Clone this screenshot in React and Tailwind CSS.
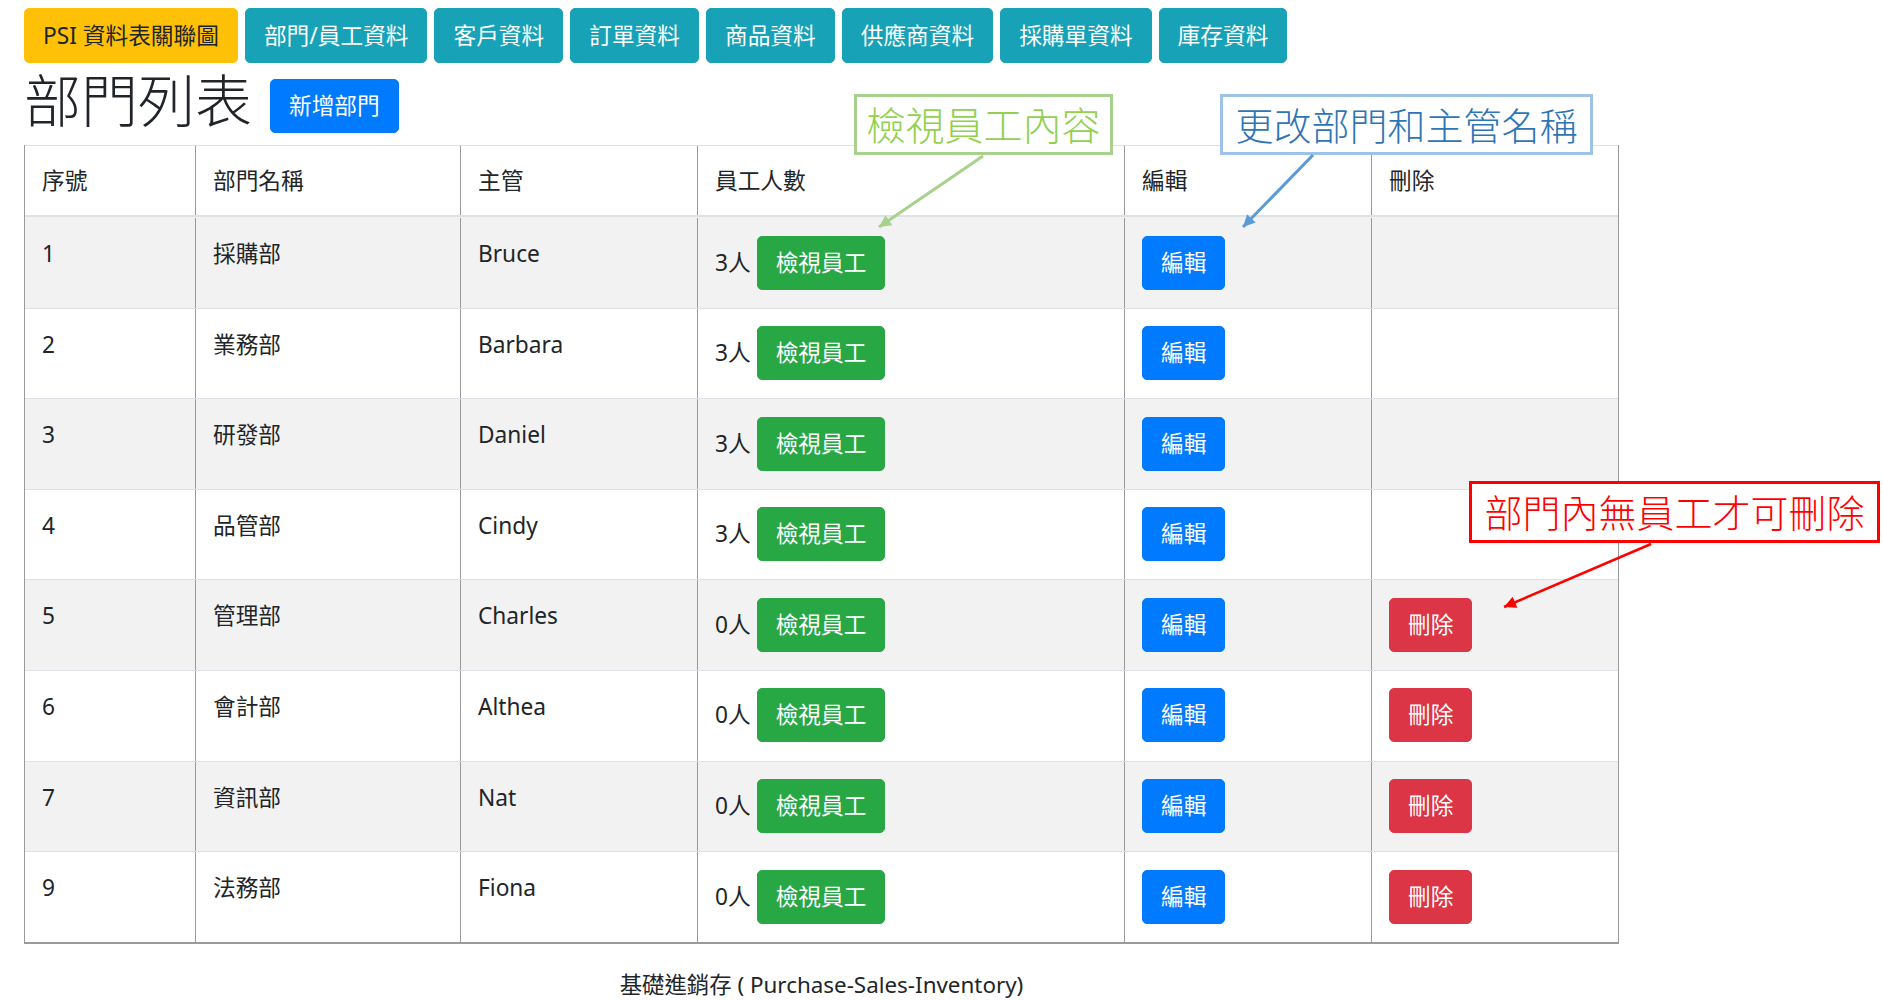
import React from "react";

const rows = [
  ["1", "採購部", "Bruce", 3, false],
  ["2", "業務部", "Barbara", 3, false],
  ["3", "研發部", "Daniel", 3, false],
  ["4", "品管部", "Cindy", 3, false],
  ["5", "管理部", "Charles", 0, true],
  ["6", "會計部", "Althea", 0, true],
  ["7", "資訊部", "Nat", 0, true],
  ["9", "法務部", "Fiona", 0, true],
];

const navs = ["部門/員工資料", "客戶資料", "訂單資料", "商品資料", "供應商資料", "採購單資料", "庫存資料"];

const GRID = "grid grid-cols-[170px_265px_237px_427px_247px_248px]";
const CELL = "px-[17px] border-l-[1.5px] border-[#9a9a9a] first:border-l-0";

function Btn({ color, children }) {
  return (
    <span
      className={`inline-flex h-[54px] items-center rounded-[5px] border-[1.4px] px-[18px] text-[22.7px] leading-[34px] text-white ${color}`}
    >
      {children}
    </span>
  );
}

export default function App() {
  return (
    <div className="relative min-h-[1000px] w-full bg-white font-['Noto_Sans','Noto_Sans_CJK_TC',sans-serif] text-[#212529]">
      <div className="pl-[24px] pt-[8px]">
        {/* nav */}
        <div className="flex gap-[7px]">
          <span className="inline-flex h-[55px] items-center rounded-[5px] border-[1.4px] border-[#ffc107] bg-[#ffc107] px-[18px] text-[22.7px] leading-[34px] text-[#212529]">
            PSI 資料表關聯圖
          </span>
          {navs.map((n) => (
            <span
              key={n}
              className="inline-flex h-[55px] items-center rounded-[5px] border-[1.4px] border-[#17a2b8] bg-[#17a2b8] px-[18px] text-[22.7px] leading-[34px] text-white"
            >
              {n}
            </span>
          ))}
        </div>

        {/* heading */}
        <div className="mt-[3px] flex h-[79px] items-start">
          <h1 className="text-[57px] font-light leading-[68px]">部門列表</h1>
          <div className="ml-[18px] mt-[13px]">
            <Btn color="border-[#007bff] bg-[#007bff]">新增部門</Btn>
          </div>
        </div>

        {/* table */}
        <div className="w-[1595px] border-x-[1.5px] border-b-[2px] border-[#9a9a9a] text-[22.7px] leading-[34px]">
          <div className={`${GRID} h-[72px] border-t-[1.4px] border-b-[2.8px] border-t-[#dee2e6] border-b-[#dee2e6]`}>
            {["序號", "部門名稱", "主管", "員工人數", "編輯", "刪除"].map((h) => (
              <div key={h} className={`${CELL} pt-[17.5px]`}>
                {h}
              </div>
            ))}
          </div>
          {rows.map(([no, name, boss, cnt, del], i) => (
            <div
              key={no}
              className={`${GRID} h-[90.6px] ${i > 0 ? "border-t-[1.4px] border-t-[#dee2e6]" : "pt-[1.4px]"} ${
                i % 2 === 0 ? "bg-[#f2f2f2]" : "bg-white"
              }`}
            >
              <div className={`${CELL} pt-[19px]`}>{no}</div>
              <div className={`${CELL} pt-[19px]`}>{name}</div>
              <div className={`${CELL} pt-[19px]`}>{boss}</div>
              <div className={`${CELL} pt-[17.5px]`}>
                <div className="flex items-center gap-[6px]">
                  <span>{cnt}人</span>
                  <Btn color="border-[#28a745] bg-[#28a745]">檢視員工</Btn>
                </div>
              </div>
              <div className={`${CELL} pt-[17.5px]`}>
                <Btn color="border-[#007bff] bg-[#007bff]">編輯</Btn>
              </div>
              <div className={`${CELL} pt-[17.5px]`}>
                {del && <Btn color="border-[#dc3545] bg-[#dc3545]">刪除</Btn>}
              </div>
            </div>
          ))}
        </div>

        {/* footer */}
        <div className="mt-[24px] w-[1595px] text-center text-[22.4px] leading-[34px]">
          基礎進銷存 ( Purchase-Sales-Inventory)
        </div>
      </div>

      {/* annotations */}
      <div className="absolute left-[854px] top-[94px] flex h-[61px] w-[259px] items-center justify-center border-[3px] border-[#a9d18e] bg-white text-[39px] font-light leading-none text-[#92d050]">
        檢視員工內容
      </div>
      <div className="absolute left-[1220px] top-[94px] flex h-[61px] w-[373px] items-center justify-center border-[3px] border-[#9dc3e6] bg-white text-[38px] font-light leading-none text-[#2e75b6]">
        更改部門和主管名稱
      </div>
      <div className="absolute left-[1469px] top-[481px] flex h-[62px] w-[411px] items-center justify-center border-[3px] border-[#ff0000] bg-white text-[38px] font-light leading-none text-[#ff0000]">
        部門內無員工才可刪除
      </div>

      <svg className="pointer-events-none absolute left-0 top-0" width="1883" height="1000">
        <defs>
          <marker id="ag" viewBox="0 0 10 10" refX="10" refY="5" markerWidth="16" markerHeight="12" markerUnits="userSpaceOnUse" orient="auto">
            <path d="M0,0 L10,5 L0,10 z" fill="#a9d18e" />
          </marker>
          <marker id="ab" viewBox="0 0 10 10" refX="10" refY="5" markerWidth="16" markerHeight="12" markerUnits="userSpaceOnUse" orient="auto">
            <path d="M0,0 L10,5 L0,10 z" fill="#5b9bd5" />
          </marker>
          <marker id="ar" viewBox="0 0 10 10" refX="10" refY="5" markerWidth="16" markerHeight="12" markerUnits="userSpaceOnUse" orient="auto">
            <path d="M0,0 L10,5 L0,10 z" fill="#ff0000" />
          </marker>
        </defs>
        <line x1="983" y1="156" x2="879" y2="227" stroke="#a9d18e" strokeWidth="3" markerEnd="url(#ag)" />
        <line x1="1313" y1="155" x2="1243" y2="227" stroke="#5b9bd5" strokeWidth="3" markerEnd="url(#ab)" />
        <line x1="1651" y1="544" x2="1504" y2="607" stroke="#ff0000" strokeWidth="2.5" markerEnd="url(#ar)" />
      </svg>
    </div>
  );
}
